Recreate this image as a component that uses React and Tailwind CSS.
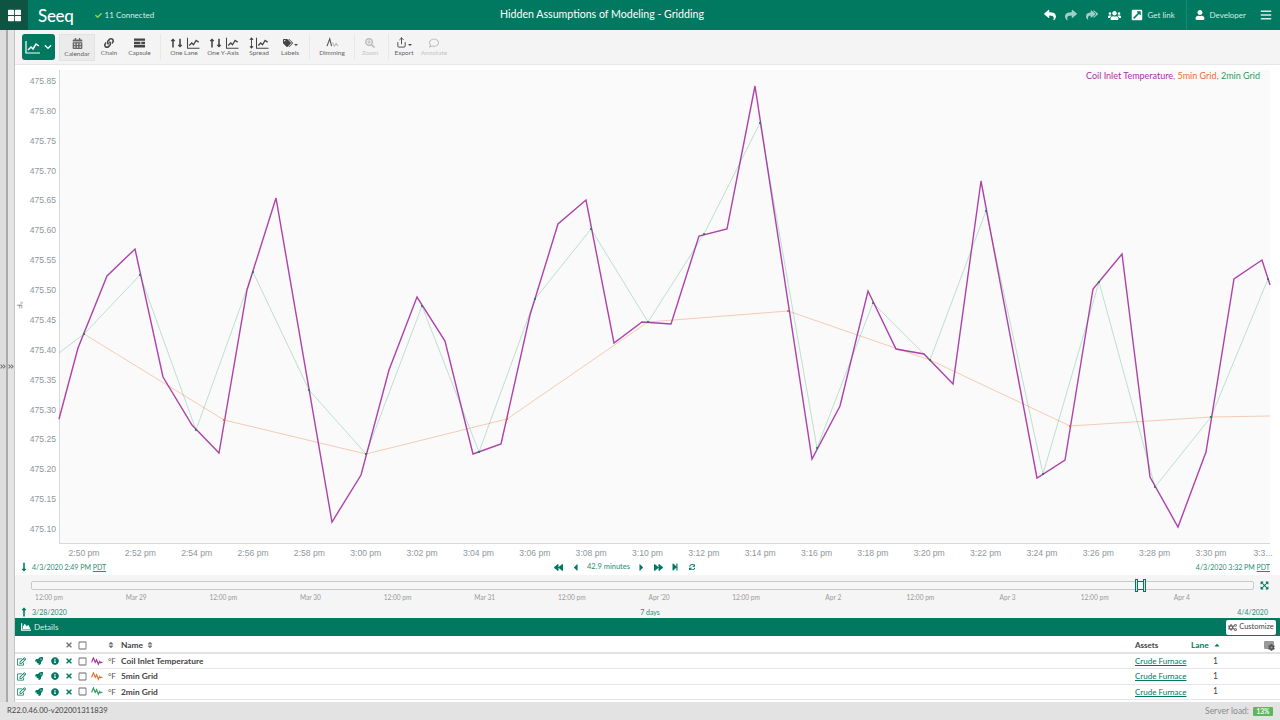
import React from 'react';
import {
  FaThLarge, FaCheck, FaReply, FaShare, FaReplyAll, FaUsers, FaExternalLinkSquareAlt, FaUser, FaBars,
  FaCalendarAlt, FaLink, FaTags, FaSearchPlus, FaRegComment, FaChevronDown, FaLongArrowAltUp, FaLongArrowAltDown,
  FaBackward, FaForward, FaCaretLeft, FaCaretRight, FaStepForward, FaSync, FaChartArea, FaCogs, FaSort,
  FaCaretUp, FaRegEdit, FaRocket, FaInfoCircle, FaTimes, FaCog, FaAngleDoubleRight, FaRegSquare, FaExpandArrowsAlt,
} from 'react-icons/fa';
import { Share } from 'lucide-react';

const purple = '59,419 78,348 107,276 135,249 163,377 192,425 219,453 247,290 276,198 332,522 361,475 389,370 417,297 445,341 473,454 501,444 530,315 558,224 586,200 614,343 642,322 671,324 699,236 727,229 755,86 812,459 840,406 868,291 896,349 924,354 953,384 981,181 1037,478 1065,460 1093,289 1122,254 1150,477 1178,527 1206,452 1234,279 1262,260 1270,285';
const green = [[59, 353], [84, 334], [140, 275], [196, 430], [253, 272], [309, 390], [366, 454], [422, 306], [479, 452], [535, 299], [591, 229], [648, 322], [704, 234], [760, 123], [817, 448], [873, 303], [930, 360], [986, 211], [1043, 474], [1099, 282], [1155, 487], [1211, 417], [1268, 279], [1270, 284]];
const orange = [[84, 334], [224, 420], [366, 454], [507, 419], [648, 322], [788, 311], [930, 360], [1070, 426], [1211, 417], [1270, 416]];

const yTicks = ['475.85', '475.80', '475.75', '475.70', '475.65', '475.60', '475.55', '475.50', '475.45', '475.40', '475.35', '475.30', '475.25', '475.20', '475.15', '475.10'];
const xTicks = ['2:50 pm', '2:52 pm', '2:54 pm', '2:56 pm', '2:58 pm', '3:00 pm', '3:02 pm', '3:04 pm', '3:06 pm', '3:08 pm', '3:10 pm', '3:12 pm', '3:14 pm', '3:16 pm', '3:18 pm', '3:20 pm', '3:22 pm', '3:24 pm', '3:26 pm', '3:28 pm', '3:30 pm'];
const navTicks = ['12:00 pm', 'Mar 29', '12:00 pm', 'Mar 30', '12:00 pm', 'Mar 31', '12:00 pm', "Apr '20", '12:00 pm', 'Apr 2', '12:00 pm', 'Apr 3', '12:00 pm', 'Apr 4'];

const pts = (arr) => arr.map((p) => p.join(',')).join(' ');

const MiniChart = ({ className = 'w-[15px] h-[12px]' }) => (
  <svg viewBox="0 0 16 14" className={className} fill="none" stroke="currentColor">
    <path d="M1 1v12h14" strokeWidth="1.2" />
    <path d="M3 10l3-3 2 2 3-5 3 2" strokeWidth="1.5" />
  </svg>
);

const Tool = ({ label, width, disabled, active, children }) => (
  <div className={`${width} h-[27px] flex flex-col items-center justify-start pt-[3px] ${active ? 'bg-[#ebebeb] border border-[#e2e2e2]' : ''} ${disabled ? 'text-[#bbbbbb]' : 'text-[#444444]'}`}>
    <div className="h-[12px] flex items-center justify-center gap-[1px]">{children}</div>
    <span className={`text-[6.5px] leading-[8px] whitespace-nowrap ${disabled ? 'text-[#c4c4c4]' : 'text-[#666666]'}`}>{label}</span>
  </div>
);

const Sep = () => <div className="w-px h-[26px] bg-[#e8e8e8]" />;

const TrendIcon = ({ color }) => (
  <svg viewBox="0 0 13 10" className="w-[12px] h-[9px]" fill="none" stroke={color} strokeWidth="1.3">
    <path d="M0.5 6L2.5 1l2 5 1.5-3 2 5 1.5-3 1 1.5 2-1" />
  </svg>
);

const rowGrid = 'grid grid-cols-[13px_22px_10px_17px_10px_20px_14px_1fr_56px_32px_57px] items-center';

const Row = ({ name, color }) => (
  <div className={`${rowGrid} h-[15.33px] border-b border-[#e6e6e6] text-[#007960]`}>
    <div className="flex justify-center"><FaRegEdit className="text-[9px]" /></div>
    <div className="flex justify-center"><FaRocket className="text-[8px]" /></div>
    <div className="flex justify-center"><FaInfoCircle className="text-[8px]" /></div>
    <div className="flex justify-center"><FaTimes className="text-[8px]" /></div>
    <div className="flex justify-center text-[#666666]"><FaRegSquare className="text-[9px]" /></div>
    <div className="flex justify-center"><TrendIcon color={color} /></div>
    <div className="pl-[1px] text-[8px] text-[#555555]">°F</div>
    <div className="text-[8.4px] font-bold text-[#444444]">{name}</div>
    <div className="text-[8px] underline whitespace-nowrap">Crude Furnace</div>
    <div className="text-right pr-[5px] text-[8.5px] text-[#444444]">1</div>
    <div />
  </div>
);

const CaretMini = () => (
  <span className="self-end mb-[3px] w-0 h-0 border-x-[2px] border-t-[2px] border-x-transparent border-t-[#444444]" />
);

export default function App() {
  return (
    <div className="w-[1280px] h-[720px] flex flex-col overflow-hidden bg-white font-['Lato',sans-serif]">
      {/* Header */}
      <div className="h-[30px] shrink-0 flex items-center bg-[#007960] text-white">
        <div className="w-[500px] flex items-center h-full">
          <div className="w-[28px] h-full flex items-center justify-center bg-[#0f5343]">
            <FaThLarge className="text-[13px]" />
          </div>
          <span className="ml-[10px] text-[17px] leading-none font-medium tracking-[-0.3px]">Seeq</span>
          <FaCheck className="ml-[21px] text-[7px] text-[#8fd14f]" />
          <span className="ml-[3px] text-[8px] text-[#d5ece6]">11 Connected</span>
        </div>
        <div className="w-[204px] text-center text-[10.6px] whitespace-nowrap">Hidden Assumptions of Modeling - Gridding</div>
        <div className="ml-auto flex items-center h-full">
          <FaReply className="text-[12px]" />
          <FaShare className="ml-[9px] text-[12px] text-[#9fcfc3]" />
          <FaReplyAll className="ml-[9px] text-[12px] text-[#9fcfc3] -scale-x-100" />
          <FaUsers className="ml-[10px] text-[13px]" />
          <FaExternalLinkSquareAlt className="ml-[10px] text-[12px]" />
          <span className="ml-[5px] w-[38px] text-[8px] text-[#d5ece6]">Get link</span>
          <div className="w-px h-full bg-[#178a70]" />
          <FaUser className="ml-[8px] text-[10px]" />
          <span className="ml-[5px] text-[8px] text-[#d5ece6]">Developer</span>
          <FaBars className="ml-[14px] mr-[8px] text-[12px] text-[#d5ece6]" />
        </div>
      </div>

      <div className="flex-1 flex min-h-0">
        {/* Collapsed side panels */}
        <div className="w-[15px] shrink-0 flex">
          <div className="w-[8px] flex items-center justify-center bg-[#dddddd] border-r-2 border-[#aaaaaa]">
            <FaAngleDoubleRight className="text-[7px] text-[#777777]" />
          </div>
          <div className="w-[7px] flex items-center justify-center bg-[#e4e4e4] border-r border-[#c4c4c4]">
            <FaAngleDoubleRight className="text-[7px] text-[#777777]" />
          </div>
        </div>

        <div className="flex-1 flex flex-col min-w-0">
          {/* Toolbar */}
          <div className="h-[35px] shrink-0 flex items-center bg-[#f4f4f4] border-b border-[#e6e6e6] pl-[7px]">
            <div className="w-[33px] h-[26px] flex items-center justify-center gap-[3px] rounded-[3px] bg-[#007960] text-white">
              <MiniChart className="w-[16px] h-[14px]" />
              <FaChevronDown className="text-[8px]" />
            </div>
            <div className="ml-[4px] flex items-center">
              <Tool label="Calendar" width="w-[36px]" active><FaCalendarAlt className="text-[11px] text-[#666666]" /></Tool>
              <Tool label="Chain" width="w-[28px]"><FaLink className="text-[10px]" /></Tool>
              <Tool label="Capsule" width="w-[33px]">
                <svg viewBox="0 0 12 10" className="w-[11px] h-[10px]" fill="#444444"><path d="M0 0h12v2.5H0zM0 3.5h7v2.5H0zM8 3.5h4v2.5H8zM0 7h12v3H0z" /></svg>
              </Tool>
            </div>
            <div className="w-[4px]" />
            <Sep />
            <div className="ml-[5px] flex items-center gap-[3px]">
              <Tool label="One Lane" width="w-[36px]"><FaLongArrowAltUp className="text-[10px] -mr-[4px]" /><FaLongArrowAltDown className="text-[10px]" /><MiniChart /></Tool>
              <Tool label="One Y-Axis" width="w-[36px]"><FaLongArrowAltUp className="text-[10px] -mr-[4px]" /><FaLongArrowAltDown className="text-[10px]" /><MiniChart /></Tool>
              <Tool label="Spread" width="w-[30px]">
                <svg viewBox="0 0 6 14" className="w-[5px] h-[12px]" fill="#333333"><path d="M3 0l2.5 3h-2v8h2L3 14 .5 11h2V3h-2z" /></svg>
                <MiniChart />
              </Tool>
              <Tool label="Labels" width="w-[26px]"><FaTags className="text-[10px]" /><CaretMini /></Tool>
            </div>
            <div className="w-[6px]" />
            <Sep />
            <div className="ml-[5px] flex items-center">
              <Tool label="Dimming" width="w-[34px]">
                <svg viewBox="0 0 14 12" className="w-[13px] h-[11px]" fill="none" strokeWidth="1.2">
                  <path d="M1 10L4 2l2 8" stroke="#555555" />
                  <path d="M7 6l2 4 2-3 2 3" stroke="#bbbbbb" />
                </svg>
              </Tool>
            </div>
            <div className="w-[5px]" />
            <Sep />
            <div className="ml-[3px]">
              <Tool label="Zoom" width="w-[24px]" disabled><FaSearchPlus className="text-[10px]" /></Tool>
            </div>
            <div className="w-[6px]" />
            <Sep />
            <div className="ml-[3px] flex items-center gap-[2px]">
              <Tool label="Export" width="w-[24px]"><Share className="w-[11px] h-[11px]" strokeWidth={2} /><CaretMini /></Tool>
              <Tool label="Annotate" width="w-[32px]" disabled><FaRegComment className="text-[10px]" /></Tool>
            </div>
          </div>

          {/* Chart */}
          <svg viewBox="15 65 1265 497" className="w-[1265px] h-[497px] shrink-0 block" fontFamily="'Liberation Sans', sans-serif">
            <rect x="59" y="70" width="1211" height="473" fill="#fafafa" />
            <path d="M59.5 70V543M59 543.5H1270" stroke="#d3d9de" strokeWidth="1" fill="none" />
            {yTicks.map((t, i) => (
              <text key={t} x="56" y={84 + i * 29.87} textAnchor="end" fontSize="8.6" fill="#8f979c">{t}</text>
            ))}
            <text x="0" y="0" transform="translate(17 305) rotate(90)" textAnchor="middle" fontSize="7.5" fill="#6f777c">°F</text>
            {xTicks.map((t, i) => (
              <text key={i} x={84 + i * 56.35} y="556" textAnchor="middle" fontSize="8.6" fill="#8f979c">{t}</text>
            ))}
            <text x="1263" y="556" textAnchor="middle" fontSize="8.6" fill="#8f979c">3:3...</text>
            <polyline points={pts(orange)} fill="none" stroke="#f0824a" strokeOpacity="0.4" strokeWidth="1" />
            <polyline points={pts(green)} fill="none" stroke="#1d9a63" strokeOpacity="0.28" strokeWidth="1" />
            <polyline points={purple} fill="none" stroke="#a3289f" strokeOpacity="0.88" strokeWidth="1.4" strokeLinejoin="miter" />
            {orange.slice(0, -1).map((p, i) => <circle key={i} cx={p[0]} cy={p[1]} r="1.1" fill="#e8641f" />)}
            {green.slice(1, -1).map((p, i) => <circle key={i} cx={p[0]} cy={p[1]} r="1.1" fill="#068c45" />)}
            <text x="1260" y="79" textAnchor="end" fontSize="9" fontFamily="Lato, sans-serif">
              <tspan fill="#a8329f">Coil Inlet Temperature</tspan>
              <tspan fill="#888888">, </tspan>
              <tspan fill="#e8702f">5min Grid</tspan>
              <tspan fill="#888888">, </tspan>
              <tspan fill="#2a9d5c">2min Grid</tspan>
            </text>
          </svg>

          {/* Display range row */}
          <div className="h-[13px] pb-[3px] shrink-0 flex items-center text-[7px] text-[#2a8c75] bg-white">
            <div className="w-[539px] flex items-center pl-[4px]">
              <FaLongArrowAltDown className="text-[10px] text-[#007960]" />
              <span className="ml-[3px] whitespace-nowrap">4/3/2020 2:49 PM <span className="underline">PDT</span></span>
            </div>
            <div className="flex items-center text-[#007960]">
              <FaBackward className="text-[9px]" />
              <FaCaretLeft className="ml-[7px] text-[11px]" />
              <span className="ml-[6px] text-[7.5px] text-[#2a8c75] whitespace-nowrap">42.9 minutes</span>
              <FaCaretRight className="ml-[6px] text-[11px]" />
              <FaForward className="ml-[7px] text-[9px]" />
              <FaStepForward className="ml-[8px] text-[8px]" />
              <FaSync className="ml-[10px] text-[6.5px]" />
            </div>
            <span className="ml-auto mr-[10px] whitespace-nowrap">4/3/2020 3:32 PM <span className="underline">PDT</span></span>
          </div>

          {/* Navigator */}
          <div className="h-[43px] shrink-0 bg-[#f5f5f5] flex flex-col relative">
            <div className="flex items-center mt-[6px] h-[9px]">
              <div className="ml-[16px] w-[1223px] h-[9px] rounded-[2px] border border-[#c9c9c9] bg-[#f7f7f7]" />
              <FaExpandArrowsAlt className="ml-[6px] text-[9px] text-[#007960]" />
            </div>
            <div className="absolute left-[1120px] top-[4px] w-[11px] h-[13px] flex justify-between">
              <div className="w-[3px] h-full border border-[#007960] bg-[#cfe6df]" />
              <div className="flex-1 my-[2px] border-y border-[#007960]" />
              <div className="w-[3px] h-full border border-[#007960] bg-[#cfe6df]" />
            </div>
            <div className="mt-[2px] ml-[4px] w-[1193px] flex justify-between text-[6.6px] leading-[10px] text-[#9a9a9a]">
              {navTicks.map((t, i) => <span key={i} className="w-[60px] text-center">{t}</span>)}
            </div>
            <div className="mt-[4px] flex items-center text-[6.6px] leading-[12px] text-[#2a8c75]">
              <div className="w-[565px] flex items-center pl-[4px]">
                <FaLongArrowAltUp className="text-[10px] text-[#007960]" />
                <span className="ml-[3px] text-[7px]">3/28/2020</span>
              </div>
              <span className="w-[140px] text-center text-[7px]">7 days</span>
              <span className="ml-auto mr-[12px] text-[7px]">4/4/2020</span>
            </div>
          </div>

          {/* Details panel */}
          <div className="h-[18px] shrink-0 flex items-center bg-[#007960] text-white pl-[6px] pr-[4px]">
            <FaChartArea className="text-[10px]" />
            <span className="ml-[3px] text-[8px] text-[#dceee9]">Details</span>
            <button className="ml-auto h-[15px] w-[50px] flex items-center justify-center gap-[2px] rounded-[2px] bg-white text-[#444444] text-[7.5px]">
              <FaCogs className="text-[9px] text-[#666666]" />
              Customize
            </button>
          </div>

          <div className={`${rowGrid} h-[18px] pt-[2px] shrink-0 border-b-2 border-[#e2e2e2] text-[#555555]`}>
            <div /><div /><div />
            <div className="flex justify-center"><FaTimes className="text-[8px] text-[#777777]" /></div>
            <div className="flex justify-center"><FaRegSquare className="text-[9px] text-[#666666]" /></div>
            <div />
            <div className="flex"><FaSort className="text-[8px] text-[#777777]" /></div>
            <div className="flex items-center gap-[3px] text-[8.4px] font-bold text-[#444444]">Name <FaSort className="text-[8px] text-[#777777]" /></div>
            <div className="text-[8px] font-bold text-[#444444]">Assets</div>
            <div className="flex items-center text-[8.4px] font-bold text-[#007960]">Lane <FaCaretUp className="ml-[4px] text-[8px]" /></div>
            <div className="flex justify-end pr-[6px]">
              <span className="relative w-[10px] h-[8px] rounded-[1px] bg-[#999999]">
                <FaCog className="absolute -right-[1px] -bottom-[2px] text-[7px] text-[#555555]" />
              </span>
            </div>
          </div>
          <Row name="Coil Inlet Temperature" color="#a8329f" />
          <Row name="5min Grid" color="#e8702f" />
          <Row name="2min Grid" color="#2a9d5c" />
        </div>
      </div>

      {/* Footer */}
      <div className="h-[18px] shrink-0 flex items-center bg-[#e3e3e3] pl-[7px] pr-[7px] text-[8.5px]">
        <span className="text-[7.6px] text-[#444444]">R22.0.46.00-v202001311839</span>
        <span className="ml-auto text-[#8a8a8a]">Server load:</span>
        <span className="ml-[4px] w-[20px] h-[9px] rounded-[1px] bg-[#5cb85c] text-white text-[6.5px] leading-[9px] font-bold text-center">13%</span>
      </div>
    </div>
  );
}
